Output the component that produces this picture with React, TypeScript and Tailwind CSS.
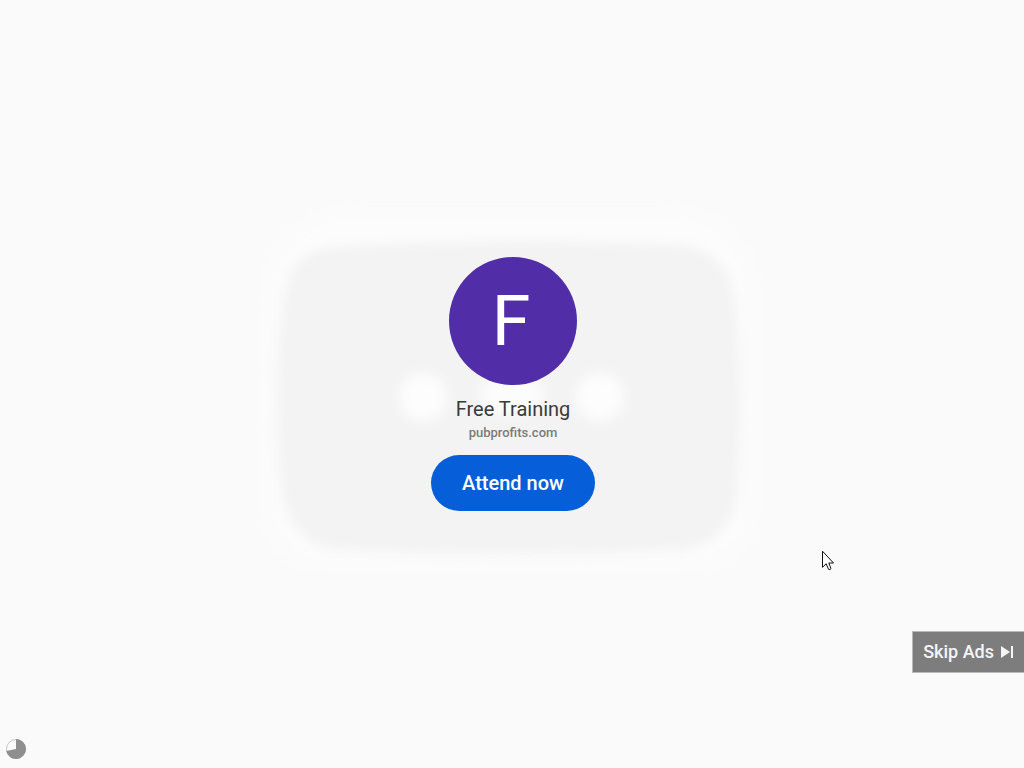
import React from 'react';

const advertiser = {
  name: 'Free Training',
  domain: 'pubprofits.com',
  action: 'Attend now',
};

const Backdrop: React.FC = () => (
  <svg
    className="pointer-events-none absolute top-1/2 left-1/2 h-[480px] w-[640px] -translate-x-1/2 -translate-y-1/2"
    viewBox="0 0 640 480"
    aria-hidden="true"
  >
    <defs>
      <filter id="panelBlur" x="-10%" y="-10%" width="120%" height="120%">
        <feGaussianBlur stdDeviation="6" />
      </filter>
      <filter id="glowBlur" x="-20%" y="-20%" width="140%" height="140%">
        <feGaussianBlur stdDeviation="12" />
      </filter>
      <filter id="spotBlur" x="-50%" y="-50%" width="200%" height="200%">
        <feGaussianBlur stdDeviation="6" />
      </filter>
    </defs>
    <path d="M150 66 H490 Q562 84 562 150 V370 Q560 420 500 424 H140 Q80 420 72 370 V150 Q78 80 150 66Z" fill="#fcfcfc" filter="url(#glowBlur)" />
    <path d="M142 103 Q318 91 488 101 Q534 104 543 156 Q553 250 545 350 Q538 400 488 406 Q318 414 146 406 Q99 401 90 350 Q79 250 91 156 Q98 106 142 103Z" fill="#f3f3f3" filter="url(#panelBlur)" />
    <circle cx="231" cy="253" r="24" fill="#fdfdfd" filter="url(#spotBlur)" />
    <circle cx="408" cy="253" r="24" fill="#fdfdfd" filter="url(#spotBlur)" />
    <ellipse cx="320" cy="250" rx="32" ry="20" fill="#fcfcfc" filter="url(#spotBlur)" />
  </svg>
);

const SkipIcon: React.FC = () => (
  <svg className="h-3 w-3" viewBox="0 0 12 12" fill="#f5f5f5" aria-hidden="true">
    <path d="M0 0 L9 6 L0 12Z" />
    <path d="M10 0H12V12H10Z" />
  </svg>
);

// remaining ad time, drawn as a pie
const AdTimer: React.FC = () => (
  <svg className="absolute bottom-[9px] left-1.5 h-5 w-5" viewBox="0 0 20 20" role="img" aria-label="Ad time remaining">
    <circle cx="10" cy="10" r="9.5" fill="#fbfbfb" stroke="#c4c4c4" strokeWidth="1" />
    <path d="M10 10 V0 A10 10 0 1 1 0.2 12Z" fill="#8f8f8f" />
  </svg>
);

const Cursor: React.FC = () => (
  <svg className="pointer-events-none absolute top-[550px] left-[822px] h-[21px] w-3" viewBox="0 0 12 21" aria-hidden="true">
    <path
      d="M0.5 1.2 V17.3 L4.2 13.8 L6.6 19.4 Q8 20.2 9 18.6 L6.8 13 H11.5Z"
      fill="#ffffff"
      stroke="#111111"
      strokeWidth="1"
    />
  </svg>
);

const App: React.FC = () => {
  return (
    <main className="relative flex min-h-screen items-center justify-center overflow-hidden bg-[#fafafa] pl-0.5 font-['Roboto',sans-serif]">
      <Backdrop />
      <div className="relative flex flex-col items-center">
        <div className="flex h-32 w-32 items-center justify-center rounded-full bg-[#512da8] pr-1 text-[70px] leading-none text-white">
          F
        </div>
        <h1 className="mt-3 text-xl leading-6 text-[#3a3a3a]">{advertiser.name}</h1>
        <p className="mt-1 text-[13px] leading-4 font-medium text-[#7b7b7b]">{advertiser.domain}</p>
        <button type="button" className="mt-3.5 h-14 rounded-full bg-[#065fd8] px-[31px] text-xl font-medium text-white">
          {advertiser.action}
        </button>
      </div>

      <button
        type="button"
        className="absolute right-0 bottom-[95px] flex h-[42px] items-center gap-[7px] border border-r-0 border-[#b8b8b8] bg-[#7d7d7d] pr-[11px] pl-2.5 text-lg font-medium text-[#f5f5f5]"
      >
        Skip Ads
        <SkipIcon />
      </button>

      <AdTimer />
      <Cursor />
    </main>
  );
};

export default App;
